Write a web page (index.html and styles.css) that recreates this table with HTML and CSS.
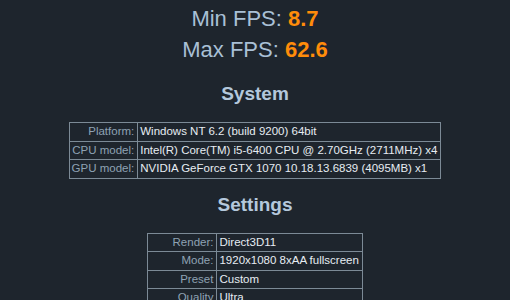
FILE: index.html
```html
<!DOCTYPE html>
<html>
<head>
    <meta charset="UTF-8">
    <title>Benchmark results</title>
    <link rel="stylesheet" href="styles.css">
</head>
<body>
<div class="stats">
    <div class="stat">Min FPS: <span class="num">8.7</span></div>
    <div class="stat">Max FPS: <span class="num">62.6</span></div>
</div>

<h2>System</h2>
<table class="info">
    <tr><td class="key">Platform:</td><td>Windows NT 6.2 (build 9200) 64bit</td></tr>
    <tr><td class="key">CPU model:</td><td>Intel(R) Core(TM) i5-6400 CPU @ 2.70GHz (2711MHz) x4</td></tr>
    <tr><td class="key">GPU model:</td><td>NVIDIA GeForce GTX 1070 10.18.13.6839 (4095MB) x1</td></tr>
</table>

<h2>Settings</h2>
<table class="info">
    <tr><td class="key">Render:</td><td>Direct3D11</td></tr>
    <tr><td class="key">Mode:</td><td>1920x1080 8xAA fullscreen</td></tr>
    <tr><td class="key">Preset</td><td>Custom</td></tr>
    <tr><td class="key">Quality</td><td>Ultra</td></tr>
    <tr><td class="key">Tessellation:</td><td>Extreme</td></tr>
</table>
</body>
</html>
```

FILE: styles.css
```css
body {
    margin: 0;
    background: #1e252d;
    color: #e6ecf2;
    text-align: center;
    font-family: "Liberation Sans", Arial, sans-serif;
}

.stats {
    padding-top: 3px;
}

.stat {
    font-size: 22px;
    line-height: 31px;
    color: #a9c0d6;
}

.num {
    font-weight: bold;
    color: #ff8c0a;
}

h2 {
    margin: 18px 0 17px;
    font-size: 19px;
    line-height: 22px;
    color: #b4c8dc;
}

.info + h2 {
    margin-top: 15px;
}

.info {
    margin: 0 auto;
    border-collapse: collapse;
    font-size: 11.5px;
    line-height: 13.5px;
    text-align: left;
}

.info td {
    border: 1px solid #7c8a96;
    padding: 2px 3px 2px 2px;
    white-space: nowrap;
}

.info td.key {
    text-align: right;
    color: #8ea2b4;
}
```
